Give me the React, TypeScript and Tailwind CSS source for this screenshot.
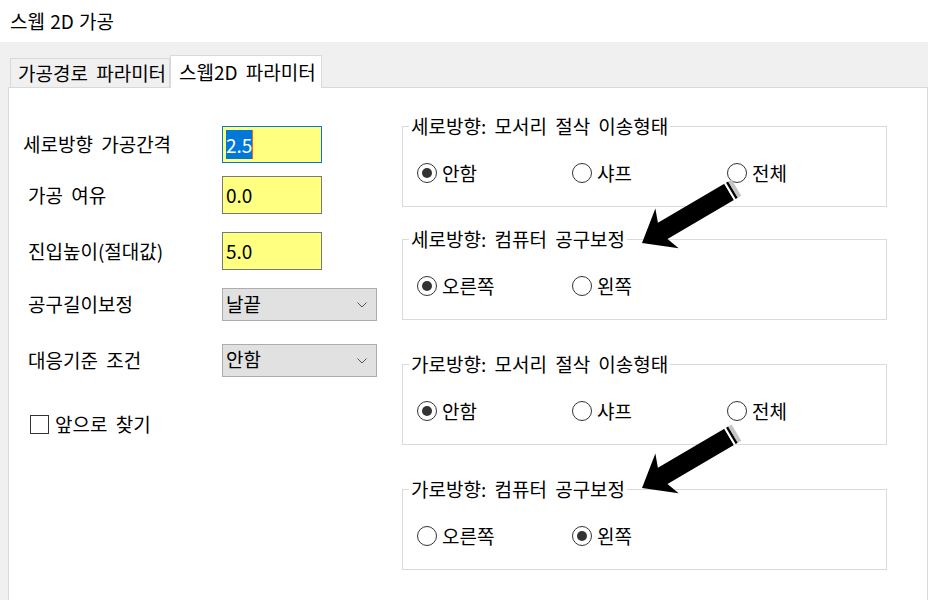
import React from 'react';

function Radio({ label, checked }: { label: string; checked?: boolean }) {
    return (
        <div className="w-[155px] flex items-center gap-[5px]">
            <span className="w-[20px] h-[20px] rounded-full border border-[#333] bg-white flex items-center justify-center shrink-0">
                {checked && <span className="w-[10px] h-[10px] rounded-full bg-[#333]" />}
            </span>
            <span>{label}</span>
        </div>
    );
}

function Group({ title, options, selected, className }: { title: string; options: string[]; selected: number; className: string }) {
    return (
        <fieldset className={`w-[485px] border border-[#dadada] ${className}`}>
            <legend className="ml-[6px] px-[2px] leading-[24px]">{title}</legend>
            <div className="flex pl-[14px] mt-[23px] mb-[21px] h-[24px] items-center">
                {options.map((o, i) => (
                    <Radio key={o} label={o} checked={i === selected} />
                ))}
            </div>
        </fieldset>
    );
}

function Chevron() {
    return (
        <svg width="10" height="6" viewBox="0 0 10 6" className="mr-[9px]">
            <polyline points="0.5,0.5 5,5 9.5,0.5" fill="none" stroke="#555" strokeWidth="1" />
        </svg>
    );
}

function Arrow({ x, y }: { x: number; y: number }) {
    return (
        <g transform={`translate(${x} ${y}) rotate(-30.4)`}>
            <polygon points="0,0 29,-23 24,-9.5 101,-9.5 101,9.5 24,9.5 29,23" fill="#000" />
            <rect x="101" y="-9.5" width="2" height="19" fill="#fff" />
            <rect x="103" y="-9.5" width="2.5" height="19" fill="#000" />
            <rect x="105.5" y="-9.5" width="4" height="19" fill="#c4c4c4" />
        </g>
    );
}

export default function App() {
    return (
        <div className="relative w-[928px] h-[600px] overflow-hidden bg-[#f0f0f0] text-black text-[19px] [word-spacing:4px] font-['Noto_Sans_CJK_KR',sans-serif]">
            <div className="h-[42px] bg-white flex items-center px-[10px] [word-spacing:1px]">스웹 2D 가공</div>

            <div className="flex items-end h-[45px] pl-[10px]">
                <div className="h-[29px] w-[160px] border border-b-0 border-[#d9d9d9] bg-[#f0f0f0] pl-[7px] flex items-center">
                    가공경로 파라미터
                </div>
                <div className="h-[33px] w-[152px] border border-b-0 border-[#d9d9d9] bg-white pl-[8px] flex items-center relative z-10 -mb-px">
                    스웹2D 파라미터
                </div>
            </div>

            <div className="ml-[8px] h-[600px] border border-[#d9d9d9] bg-white flex">
                <div className="w-[385px] pt-[38px]">
                    <div className="flex items-center h-[37px]">
                        <div className="w-[213px] pl-[14px]">세로방향 가공간격</div>
                        <div className="w-[100px] h-[37px] border border-[#0078d7] bg-[#ffff80] flex items-center pl-[3px]">
                            <span className="bg-[#0078d7] text-white leading-[29px]">2.5</span>
                            <span className="w-px h-[29px] bg-[#e86a1c]" />
                        </div>
                    </div>
                    <div className="flex items-center h-[38px] mt-[13px]">
                        <div className="w-[213px] pl-[19px]">가공 여유</div>
                        <div className="w-[100px] h-[38px] border border-[#7a7a7a] bg-[#ffff80] flex items-center pl-[3px]">0.0</div>
                    </div>
                    <div className="flex items-center h-[38px] mt-[18px]">
                        <div className="w-[213px] pl-[19px]">진입높이(절대값)</div>
                        <div className="w-[100px] h-[38px] border border-[#7a7a7a] bg-[#ffff80] flex items-center pl-[3px]">5.0</div>
                    </div>
                    <div className="flex items-center h-[33px] mt-[18px]">
                        <div className="w-[213px] pl-[19px]">공구길이보정</div>
                        <div className="w-[155px] h-[33px] border border-[#adadad] bg-[#e1e1e1] flex items-center justify-between pl-[3px]">
                            <span>날끝</span>
                            <Chevron />
                        </div>
                    </div>
                    <div className="flex items-center h-[33px] mt-[23px]">
                        <div className="w-[213px] pl-[19px]">대응기준 조건</div>
                        <div className="w-[155px] h-[33px] border border-[#adadad] bg-[#e1e1e1] flex items-start justify-between pl-[3px]">
                            <span className="leading-[28px]">안함</span>
                            <span className="self-center">
                                <Chevron />
                            </span>
                        </div>
                    </div>
                    <div className="flex items-center mt-[33px] pl-[21px] gap-[6px]">
                        <span className="w-[19px] h-[19px] border border-[#333] bg-white" />
                        <span>앞으로 찾기</span>
                    </div>
                </div>

                <div className="flex flex-col pt-[26px] pl-[8px]">
                    <Group title="세로방향: 모서리 절삭 이송형태" options={['안함', '샤프', '전체']} selected={0} className="" />
                    <Group title="세로방향: 컴퓨터 공구보정" options={['오른쪽', '왼쪽']} selected={0} className="mt-[20px]" />
                    <Group title="가로방향: 모서리 절삭 이송형태" options={['안함', '샤프', '전체']} selected={0} className="mt-[32px]" />
                    <Group title="가로방향: 컴퓨터 공구보정" options={['오른쪽', '왼쪽']} selected={1} className="mt-[32px]" />
                </div>
            </div>

            <svg className="absolute inset-0 pointer-events-none" width="928" height="600">
                <Arrow x={642} y={243} />
                <Arrow x={642} y={488} />
            </svg>
        </div>
    );
}
